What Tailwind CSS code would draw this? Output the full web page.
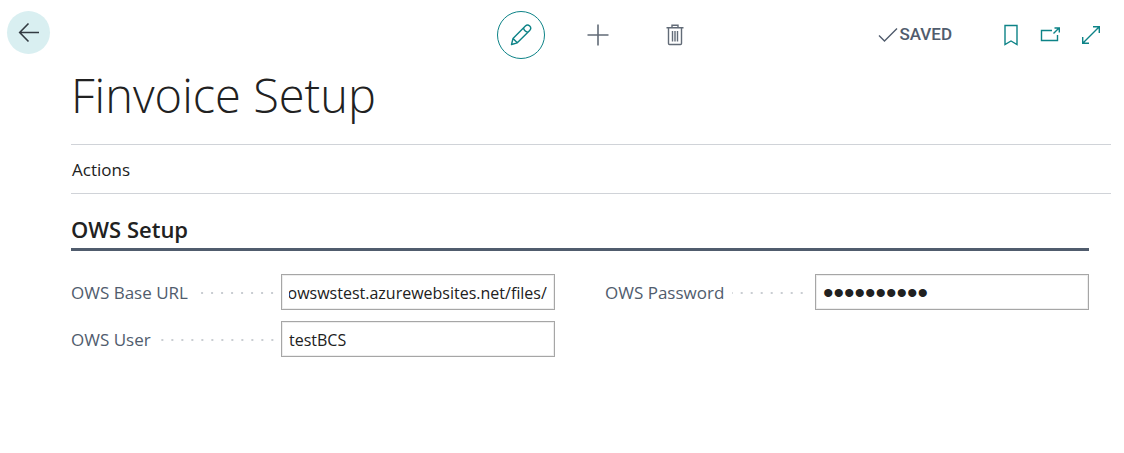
<!DOCTYPE html>
<html lang="en">
<head>
<meta charset="utf-8">
<title>Finvoice Setup</title>
<script src="https://cdn.jsdelivr.net/npm/@tailwindcss/browser@4"></script>
</head>
<body class="bg-white font-['Open_Sans','Noto_Sans',sans-serif] text-[#212121]">
<div class="flex min-h-screen pt-[11px] pr-[13px] pl-[7px]">
  <div class="w-16 shrink-0">
    <button type="button" aria-label="Back" class="flex size-[43px] items-center justify-center rounded-full bg-[#d9eff1]">
      <svg class="size-6" viewBox="0 0 24 24" fill="none" stroke="#333b42" stroke-width="1.6"><path d="M22 11.500H3M11.500 2.500L2.700 11.500L11.500 20.500"/></svg>
    </button>
  </div>
  <main class="min-w-0 flex-1">
    <header class="mr-0.5 grid grid-cols-[1fr_auto_1fr] items-center">
      <div></div>
      <div class="flex items-center">
        <button type="button" aria-label="Edit" class="flex size-12 items-center justify-center rounded-full border border-[#0d8387] text-[#0d8387]">
          <svg class="size-6" viewBox="0 0 24 24" fill="none" stroke="currentColor" stroke-width="1.4" stroke-linejoin="round"><path d="M2.500 21.500L4 15.500L16.400 3.100C17.700 1.800 19.500 1.900 20.700 3.100C21.900 4.300 22 6.100 20.700 7.400L8.300 19.800ZM4 15.500L8.300 19.800M14.600 4.900C15 7.500 16.300 8.800 18.900 9.200"/></svg>
        </button>
        <button type="button" aria-label="New" class="ml-[42px] text-[#626b77]">
          <svg class="size-[22px]" viewBox="0 0 22 22" fill="none" stroke="currentColor" stroke-width="1.6"><path d="M0.500 11H21.500M11 0.500V21.500"/></svg>
        </button>
        <button type="button" aria-label="Delete" class="ml-[57px] text-[#626b77]">
          <svg class="h-[22px] w-[18px]" viewBox="0 0 18 22" fill="none" stroke="currentColor" stroke-width="1.400"><path d="M0.500 3.700H17.500M6 3.500V1.200H12V3.500M2.500 3.700V19.500Q2.500 20.500 3.500 20.500H14.500Q15.500 20.500 15.500 19.500V3.700M6.500 7V17.500M9 7V17.500M11.500 7V17.500"/></svg>
        </button>
      </div>
      <div class="flex items-center justify-end pr-2 text-[#0d8387]">
        <div role="status" class="mr-[51px] flex items-center gap-px font-['Roboto',sans-serif] text-[17px] font-medium text-[#505c6d]">
          <svg class="h-[18px] w-5" viewBox="0 0 20 18" fill="none" stroke="currentColor" stroke-width="1.400"><path d="M1 9.500L6.500 15L19 2.500"/></svg>
          <span>SAVED</span>
        </div>
        <button type="button" aria-label="Bookmark">
          <svg class="h-[22px] w-4" viewBox="0 0 16 22" fill="none" stroke="currentColor" stroke-width="1.400"><path d="M2 1.500H14V20.500L8 17L2 20.500Z"/></svg>
        </button>
        <button type="button" aria-label="Open in new window" class="ml-5">
          <svg class="h-5 w-[22px]" viewBox="0 0 22 20" fill="none" stroke="currentColor" stroke-width="1.400"><path d="M13 5.500H2.500V15.500H18.500V10M14.500 8.500L20 3M15.500 3H20.300V7.500"/></svg>
        </button>
        <button type="button" aria-label="Expand" class="ml-5">
          <svg class="size-5" viewBox="0 0 20 20" fill="none" stroke="currentColor" stroke-width="1.400"><path d="M2 18L18 2M12 1.700H18.300V8M1.700 12V18.300H8"/></svg>
        </button>
      </div>
    </header>

    <h1 class="mt-1 text-[47px] leading-[64px] font-light">Finvoice Setup</h1>

    <nav class="mt-[17px] flex h-[50px] items-center border-y border-[#d0d3d8]">
      <button type="button" class="px-px pt-0.5 text-[17px] leading-6">Actions</button>
    </nav>

    <section class="mr-[22px]">
      <h2 class="mt-5 border-b-[3px] border-[#505c6d] pb-1 text-[22px] leading-[30px] font-semibold">OWS Setup</h2>
      <form class="mt-[23px] grid grid-cols-2 items-start gap-x-[50px] text-[17px]">
        <div class="grid gap-[11px]">
          <div class="flex items-center">
            <label for="url" class="flex w-[210px] shrink-0 items-center pt-0.5 text-[#505c6d]">OWS Base URL<span class="mr-1 ml-2 h-1 flex-1 bg-[radial-gradient(circle,#c9cdd2_1px,transparent_1px)] bg-[length:10px_4px] bg-right"></span></label>
            <input id="url" type="text" value="https://owswstest.azurewebsites.net/files/" class="h-9 w-0 min-w-0 flex-1 border border-[#a6a6a6] px-[7px] pt-0.5 text-base shadow-[inset_0_0_0_1px_#eeeeee]">
          </div>
          <div class="flex items-center">
            <label for="user" class="flex w-[210px] shrink-0 items-center pt-0.5 text-[#505c6d]">OWS User<span class="mr-1 ml-2 h-1 flex-1 bg-[radial-gradient(circle,#c9cdd2_1px,transparent_1px)] bg-[length:10px_4px] bg-right"></span></label>
            <input id="user" type="text" value="testBCS" class="h-9 w-0 min-w-0 flex-1 border border-[#a6a6a6] px-[7px] pt-0.5 text-base shadow-[inset_0_0_0_1px_#eeeeee]">
          </div>
        </div>
        <div class="flex items-center">
          <label for="password" class="flex w-[210px] shrink-0 items-center pt-0.5 text-[#505c6d]">OWS Password<span class="mr-2 ml-2 h-1 flex-1 bg-[radial-gradient(circle,#c9cdd2_1px,transparent_1px)] bg-[length:10px_4px] bg-right"></span></label>
          <input id="password" type="password" value="password12" class="h-9 w-0 min-w-0 flex-1 border border-[#a6a6a6] px-[7px] font-['Liberation_Sans',sans-serif] text-[30px] shadow-[inset_0_0_0_1px_#eeeeee]">
        </div>
      </form>
    </section>
  </main>
</div>
<script>
  // Show the end of the address when it is longer than its field
  const url = document.getElementById('url');
  const showEnd = () => { url.scrollLeft = url.scrollWidth; };
  showEnd();
  window.addEventListener('load', showEnd);
  document.fonts.ready.then(showEnd);
</script>
</body>
</html>
